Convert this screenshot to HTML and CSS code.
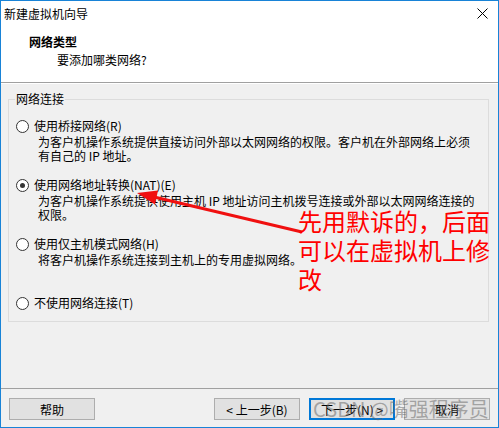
FILE: index.html
```html
<!DOCTYPE html>
<html lang="zh-CN">
<head>
    <meta charset="UTF-8">
    <title>新建虚拟机向导</title>
    <link rel="stylesheet" href="styles.css">
</head>
<body>
    <div class="window">
        <div class="header">
            <div class="titlebar">
                <span class="title">新建虚拟机向导</span>
                <svg class="close" width="11" height="11" viewBox="0 0 11 11">
                    <path d="M0.5 0.5 L10.5 10.5 M10.5 0.5 L0.5 10.5" stroke="#000" stroke-width="1" fill="none"/>
                </svg>
            </div>
            <div class="heading">网络类型</div>
            <div class="subheading">要添加哪类网络?</div>
        </div>

        <div class="content">
            <fieldset class="group">
                <legend>网络连接</legend>

                <div class="option">
                    <div class="option-label"><span class="radio"></span>使用桥接网络(R)</div>
                    <div class="option-desc">为客户机操作系统提供直接访问外部以太网网络的权限。客户机在外部网络上必须<br>有自己的 IP 地址。</div>
                </div>

                <div class="option">
                    <div class="option-label"><span class="radio checked"></span>使用网络地址转换(NAT)(E)</div>
                    <div class="option-desc">为客户机操作系统提供使用主机 IP 地址访问主机拨号连接或外部以太网网络连接的<br>权限。</div>
                </div>

                <div class="option">
                    <div class="option-label"><span class="radio"></span>使用仅主机模式网络(H)</div>
                    <div class="option-desc">将客户机操作系统连接到主机上的专用虚拟网络。</div>
                </div>

                <div class="option last">
                    <div class="option-label"><span class="radio"></span>不使用网络连接(T)</div>
                </div>
            </fieldset>
        </div>

        <div class="footer">
            <button class="btn">帮助</button>
            <div class="btn-group">
                <button class="btn">&lt; 上一步(B)</button>
                <button class="btn default">下一步(N) &gt;</button>
                <button class="btn">取消</button>
            </div>
        </div>

        <!-- 标注 -->
        <svg class="arrow" width="499" height="428" viewBox="0 0 499 428">
            <line x1="302" y1="232" x2="152" y2="196.5" stroke="#f01010" stroke-width="3"/>
            <polygon points="137,193 158,190.5 155,204.5" fill="#f01010"/>
        </svg>
        <div class="note">先用默诉的，后面<br>可以在虚拟机上修<br>改</div>
        <div class="watermark">CSDN @嘴强程序员</div>
    </div>
</body>
</html>
```

FILE: styles.css
```css
body {
    margin: 0;
    font-family: "Noto Sans CJK SC", "Liberation Sans", sans-serif;
    font-size: 12px;
    color: #000;
}
.window {
    position: relative;
    width: 499px;
    height: 428px;
    box-sizing: border-box;
    border: 1px solid #1883d7;
    background: #f0f0f0;
    display: flex;
    flex-direction: column;
    overflow: hidden;
}
.header {
    background: #fff;
    height: 81px;
    border-bottom: 1px solid #a0a0a0;
    box-shadow: 0 1px 0 #fff;
}
.titlebar {
    height: 25px;
    display: flex;
    align-items: center;
    justify-content: space-between;
    padding: 0 10px 0 3px;
}
.title {
    font-size: 12px;
    line-height: 25px;
}
.close {
    display: block;
}
.heading {
    margin-top: 7px;
    padding-left: 28px;
    font-weight: bold;
    line-height: 18px;
}
.subheading {
    padding-left: 56px;
    line-height: 18px;
}
.content {
    flex: 1;
    padding: 8px 9px 0 7px;
}
.group {
    margin: 0;
    border: 1px solid #dcdcdc;
    padding: 11px 7px 10px 7px;
}
.group legend {
    padding: 0 1px;
    margin-left: -1px;
    line-height: 16px;
}
.option {
    height: 59px;
}
.option.last {
    height: auto;
}
.option-label {
    display: flex;
    align-items: center;
    line-height: 16px;
    height: 16px;
}
.radio {
    width: 11px;
    height: 11px;
    border: 1px solid #333;
    border-radius: 50%;
    background: #fff;
    margin-right: 5px;
    position: relative;
    flex-shrink: 0;
}
.radio.checked::after {
    content: "";
    position: absolute;
    left: 3px;
    top: 3px;
    width: 5px;
    height: 5px;
    border-radius: 50%;
    background: #333;
}
.option-desc {
    padding-left: 22px;
    margin-top: 1px;
    line-height: 14px;
}
.footer {
    height: 39px;
    border-top: 1px solid #a0a0a0;
    box-sizing: border-box;
    display: flex;
    justify-content: space-between;
    padding: 9px 8px 0 8px;
}
.btn-group {
    display: flex;
    gap: 9px;
}
.btn {
    width: 86px;
    height: 22px;
    background: #e1e1e1;
    border: 1px solid #adadad;
    font-family: "Noto Sans CJK SC", "Liberation Sans", sans-serif;
    font-size: 12px;
    padding: 0;
    color: #000;
}
.btn.default {
    border: 2px solid #0078d7;
}
.arrow {
    position: absolute;
    left: -1px;
    top: -1px;
    pointer-events: none;
}
.note {
    position: absolute;
    left: 297px;
    top: 205px;
    font-size: 24px;
    line-height: 29px;
    color: #ff0000;
    white-space: nowrap;
}
.watermark {
    position: absolute;
    left: 312px;
    top: 395px;
    font-size: 20px;
    line-height: 26px;
    color: rgba(100, 100, 100, 0.5);
    white-space: nowrap;
}
```
